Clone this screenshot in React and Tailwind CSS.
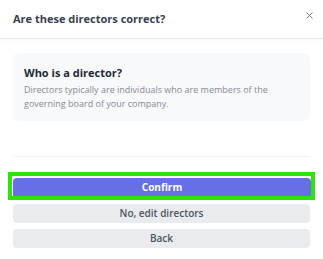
import { XIcon } from "lucide-react";

export default function App() {
  return (
    <div className="w-[323px] h-[259px] bg-white overflow-hidden" style={{ fontFamily: "'Open Sans', sans-serif" }}>
      {/* Header */}
      <div className="h-[39px] flex items-center justify-between px-[13px] border-b border-[#e5e7eb] shadow-[0_1px_2px_rgba(0,0,0,0.04)]">
        <h2 className="text-[11px] font-bold text-[#374151]">Are these directors correct?</h2>
        <XIcon className="w-[11px] h-[11px] text-[#6b7280] -mt-[7px] -mr-[5px]" strokeWidth={2} />
      </div>

      {/* Body */}
      <div className="px-[13px] pt-[14px]">
        <div className="h-[68px] rounded-[6px] bg-[#f8f9fa] px-[11px] pt-[13px]">
          <h3 className="text-[11px] font-bold text-[#1f2937] leading-[14px]">Who is a director?</h3>
          <p className="mt-[3px] text-[9px] leading-[14px] text-[#848a95]">
            Directors typically are individuals who are members of the governing board of your company.
          </p>
        </div>
        <div className="mt-[35px] border-t border-[#f0f1f3]" />
      </div>

      {/* Actions */}
      <div className="px-[13px] mt-[15px] flex flex-col">
        <div className="-mx-[5px] border-[4px] border-[#2ee20a] pt-[2px] pl-[1px]">
          <button className="w-full h-[18px] rounded-t-[4px] bg-[#6670e4] text-white text-[10px] font-bold flex items-center justify-center">
            Confirm
          </button>
        </div>
        <button className="mt-[4px] w-full h-[19px] rounded-[4px] bg-[#e9ebee] text-[#4b5563] text-[10px] font-semibold flex items-center justify-center">
          No, edit directors
        </button>
        <button className="mt-[6px] w-full h-[19px] rounded-[4px] bg-[#e9ebee] text-[#4b5563] text-[10px] font-semibold flex items-center justify-center">
          Back
        </button>
      </div>
    </div>
  );
}
